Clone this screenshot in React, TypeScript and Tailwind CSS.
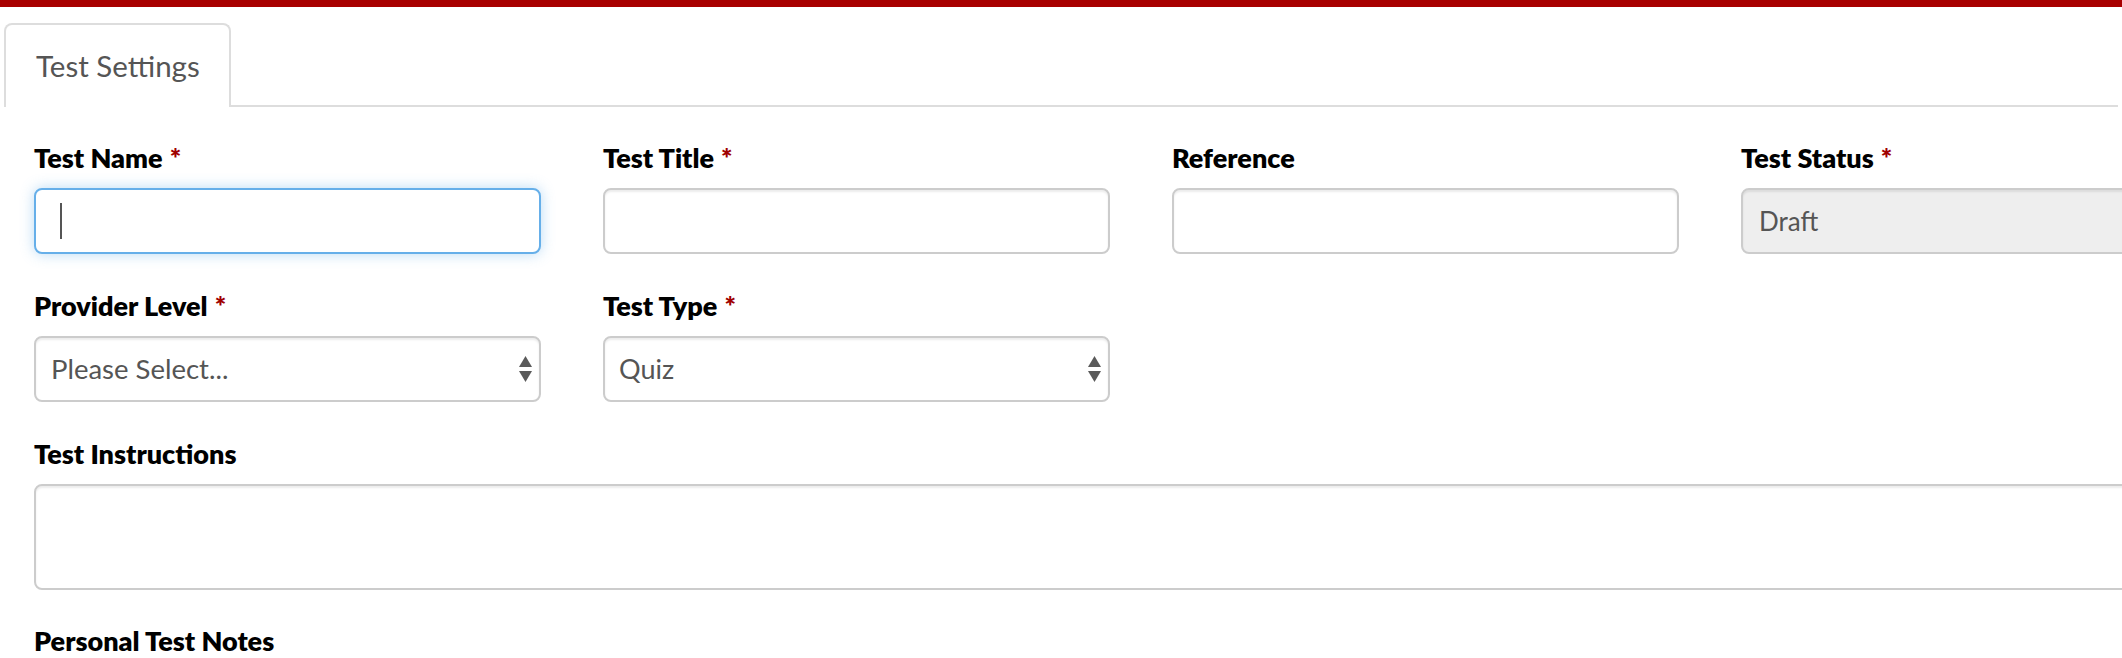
import React from "react";

function Label({ text, required }: { text: string; required?: boolean }) {
  return (
    <div className="h-[40px] leading-[40px] mb-[10px] text-[27px] font-extrabold text-black whitespace-nowrap">
      {text}
      {required && <span className="text-[#a00000] ml-[7px]">*</span>}
    </div>
  );
}

function Arrows() {
  return (
    <svg width="13" height="26" viewBox="0 0 13 26" className="shrink-0">
      <path d="M6.5 0 L13 11 L0 11 Z" fill="#5a5a5a" />
      <path d="M0 15 L13 15 L6.5 26 Z" fill="#5a5a5a" />
    </svg>
  );
}

export default function App() {
  return (
    <div className="w-[2122px] h-[658px] overflow-hidden bg-white [font-family:Lato,'Liberation_Sans',sans-serif]">
      <div className="h-[7px] bg-[#a80000]" />
      <div className="pt-[16px] px-[4px]">
        <div className="flex border-b-2 border-[#dddddd] h-[84px]">
          <div className="relative bg-white h-[84px] w-[227px] border-x-2 border-t-2 border-[#dddddd] rounded-t-[8px] flex items-center pl-[30px] text-[29.5px] text-[#555555]">
            Test Settings
          </div>
        </div>
      </div>
      <div className="pl-[34px] pt-[31px]">
        <div className="grid grid-cols-[repeat(4,507px)] gap-x-[62px]">
          <div className="mb-[32px]">
            <Label text="Test Name" required />
            <div className="h-[66px] border-2 border-[#66afe9] rounded-[8px] bg-white shadow-[0_0_14px_rgba(102,175,233,0.45)] flex items-center pl-[24px]">
              <span className="w-[2px] h-[36px] bg-[#555555]" />
            </div>
          </div>
          <div className="mb-[32px]">
            <Label text="Test Title" required />
            <div className="h-[66px] border-2 border-[#cccccc] rounded-[8px] bg-white shadow-[inset_0_2px_2px_rgba(0,0,0,0.075)]" />
          </div>
          <div className="mb-[32px]">
            <Label text="Reference" />
            <div className="h-[66px] border-2 border-[#cccccc] rounded-[8px] bg-white shadow-[inset_0_2px_2px_rgba(0,0,0,0.075)]" />
          </div>
          <div className="mb-[32px]">
            <Label text="Test Status" required />
            <div className="h-[66px] border-2 border-[#cccccc] rounded-[8px] bg-[#eeeeee] shadow-[inset_0_2px_2px_rgba(0,0,0,0.075)] flex items-center pl-[16px] text-[26px] text-[#555555]">
              Draft
            </div>
          </div>

          <div className="mb-[32px]">
            <Label text="Provider Level" required />
            <div className="h-[66px] border-2 border-[#cccccc] rounded-[8px] bg-white shadow-[inset_0_2px_2px_rgba(0,0,0,0.075)] flex items-center justify-between pl-[15px] pr-[7px] text-[27.5px] text-[#555555]">
              <span>Please Select...</span>
              <Arrows />
            </div>
          </div>
          <div className="mb-[32px]">
            <Label text="Test Type" required />
            <div className="h-[66px] border-2 border-[#cccccc] rounded-[8px] bg-white shadow-[inset_0_2px_2px_rgba(0,0,0,0.075)] flex items-center justify-between pl-[14px] pr-[7px] text-[27px] text-[#555555]">
              <span>Quiz</span>
              <Arrows />
            </div>
          </div>
          <div />
          <div />

          <div className="col-span-4 mb-[31px]">
            <Label text="Test Instructions" />
            <div className="h-[106px] border-2 border-[#cccccc] rounded-[8px] bg-white shadow-[inset_0_2px_2px_rgba(0,0,0,0.075)]" />
          </div>

          <div className="col-span-4">
            <Label text="Personal Test Notes" />
          </div>
        </div>
      </div>
    </div>
  );
}
